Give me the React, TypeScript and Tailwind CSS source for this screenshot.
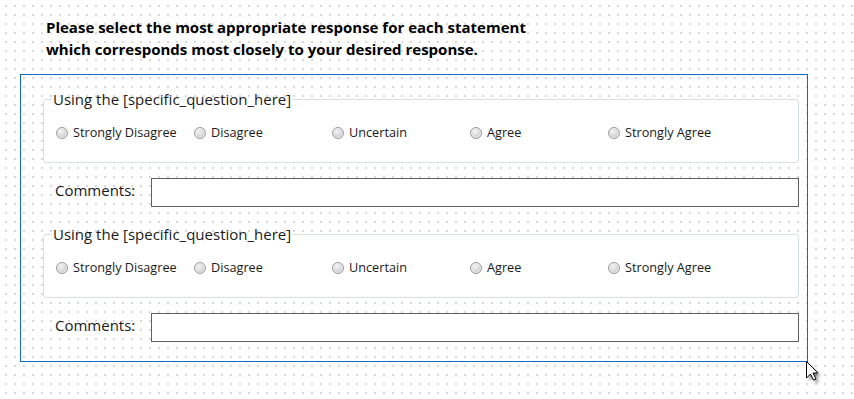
const OPTIONS = ["Strongly Disagree", "Disagree", "Uncertain", "Agree", "Strongly Agree"];

function Radio({ label }: { label: string }) {
  return (
    <label className="flex w-[138px] items-center gap-[5px] text-[12.7px] text-[#1a1a1a]">
      <span className="block h-[12px] w-[12px] shrink-0 rounded-full border border-[#9a9a9a] bg-[radial-gradient(circle_at_40%_35%,#f4f4f4_0%,#d6d6d6_55%,#c4c4c4_100%)] shadow-[inset_0_0_0_1px_#f2f2f2]" />
      <span>{label}</span>
    </label>
  );
}

function Question() {
  return (
    <>
      <fieldset className="h-[74px] rounded-[3px] border border-[#d5dfe5] bg-white">
        <legend className="ml-[8px] px-[1px] text-[15px] leading-[20px] text-[#1a1a1a]">
          Using the [specific_question_here]
        </legend>
        <div className="mt-[14px] flex pl-[12px]">
          {OPTIONS.map((o) => (
            <Radio key={o} label={o} />
          ))}
        </div>
      </fieldset>
      <div className="mt-[15px] flex items-center">
        <span className="w-[108px] pb-[4px] pl-[12px] text-[15px] text-[#1a1a1a]">Comments:</span>
        <div className="h-[29px] flex-1 border border-[#5f5f5f] bg-white" />
      </div>
    </>
  );
}

export default function App() {
  return (
    <div
      className="relative h-[399px] w-[854px] overflow-hidden bg-white bg-[radial-gradient(circle_at_1px_1px,#c4c4c4_0.6px,transparent_0.9px)] bg-[length:9px_9px] bg-[position:5px_5px]"
      style={{ fontFamily: '"Open Sans", "Noto Sans", sans-serif' }}
    >
      <div className="pl-[46px] pt-[16px] text-[15px] font-bold leading-[22px] text-black">
        <p>Please select the most appropriate response for each statement</p>
        <p>which corresponds most closely to your desired response.</p>
      </div>

      <div className="ml-[20px] mt-[14px] h-[288px] w-[788px] border border-[#1469cc] pl-[22px] pr-[8px] pt-[14px]">
        <Question />
        <div className="mt-[17px]">
          <Question />
        </div>
      </div>

      {/* mouse pointer */}
      <svg className="absolute left-[806px] top-[361px]" width="20" height="24" viewBox="0 0 20 24">
        <defs>
          <filter id="sh" x="-50%" y="-50%" width="200%" height="200%">
            <feGaussianBlur stdDeviation="1.6" />
          </filter>
        </defs>
        <path d="M3 3 L3 20 L7 16 L10 22 L13 21 L10 15 L15 15 Z" fill="#000" opacity="0.45" filter="url(#sh)" />
        <path d="M0.5 0.5 L0.5 17 L4.5 13 L7.5 19 L10 18 L7 12 L12 12 Z" fill="#fff" stroke="#000" strokeWidth="1" strokeLinejoin="miter" />
      </svg>
    </div>
  );
}
